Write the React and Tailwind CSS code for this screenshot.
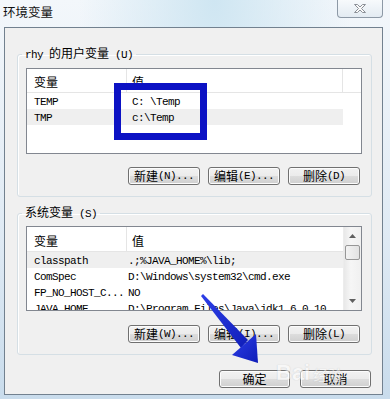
import React from "react";

// ascii text drawn in a monospace face, like SimSun's latin glyphs
function A({ children }) {
  return (
    <span className="font-['Liberation_Mono',monospace] text-[11px] tracking-[-0.6px]">
      {children}
    </span>
  );
}

function Btn({ cn, en, w = "w-[72px]" }) {
  return (
    <div
      className={`${w} h-[18px] rounded-[3px] border border-[#707070] bg-[linear-gradient(#f2f2f2_0%,#ebebeb_50%,#dddddd_50%,#cfcfcf_100%)] shadow-[inset_0_0_0_1px_#fcfcfc] flex items-center justify-center leading-[16px]`}
    >
      <span className="text-[12px]">{cn}</span>
      {en && <A>{" " + en}</A>}
    </div>
  );
}

function CloseBtn() {
  return (
    <div className="mr-[7px] w-[46px] h-[18px] border border-t-0 border-[#8d99a6] rounded-b-[4px] bg-[linear-gradient(#f7fafc,#e3ebf2)] flex items-center justify-center">
      <svg width="14" height="11" viewBox="0 0 14 11">
        <path
          d="M1.5 1.5h3l2.5 2.5 2.5-2.5h3l-4 4 4 4h-3l-2.5-2.5-2.5 2.5h-3l4-4z"
          fill="#fafafa"
          stroke="#8a8f96"
          strokeWidth="1"
          strokeLinejoin="round"
        />
      </svg>
    </div>
  );
}

function Header({ h }) {
  return (
    <div className={`${h} flex border-b border-[#e5e5e5] shrink-0`}>
      <div className="w-[100px] pl-[7px] pt-[3px] flex items-center border-r border-[#e5e5e5]">
        变量
      </div>
      <div className="w-[216px] pl-[5px] pt-[3px] flex items-center border-r border-[#e5e5e5]">
        值
      </div>
      <div className="flex-1" />
    </div>
  );
}

function Row({ name, value, sel, vpad = "pl-[5px]" }) {
  return (
    <div
      className={`w-[316px] h-[16px] flex items-center shrink-0 whitespace-nowrap overflow-hidden ${
        sel ? "bg-[#efefef]" : ""
      }`}
    >
      <div className="w-[100px] pl-[7px] overflow-hidden">
        <A>{name}</A>
      </div>
      <div className={`w-[216px] ${vpad} overflow-hidden`}>
        <A>{value}</A>
      </div>
    </div>
  );
}

function ScrollBar() {
  return (
    <div className="w-[18px] h-full bg-[linear-gradient(90deg,#e8e8e8,#f6f6f6_40%,#f0f0f0)] border-l border-[#ececec] flex flex-col items-center">
      <div className="h-[18px] w-full flex items-center justify-center">
        <svg width="7" height="4" viewBox="0 0 7 4">
          <path d="M0 4L3.5 0 7 4z" fill="#606060" />
        </svg>
      </div>
      <div className="h-[15px] w-[15px] rounded-[2px] border border-[#979797] bg-[linear-gradient(90deg,#f3f3f3,#e2e2e2)]" />
      <div className="flex-1" />
      <div className="h-[18px] w-full flex items-center justify-center">
        <svg width="7" height="4" viewBox="0 0 7 4">
          <path d="M0 0L3.5 4 7 0z" fill="#606060" />
        </svg>
      </div>
    </div>
  );
}

export default function App() {
  return (
    <div className="relative w-[390px] h-[399px] overflow-hidden bg-[radial-gradient(ellipse_at_55%_0%,#cfe6f2_0%,transparent_45%),linear-gradient(180deg,#f3f7fb_0%,#dfeaf4_60%,#c9dcec_100%)] font-['Noto_Sans_CJK_SC',sans-serif] text-[12px] text-black">
      {/* title bar */}
      <div className="h-[27px] flex items-start justify-between">
        <div className="pl-[3px] pt-[4px] text-[12.5px] leading-[16px] text-[#111]">
          环境变量
        </div>
        <CloseBtn />
      </div>

      {/* client area */}
      <div className="ml-[4px] w-[379px] h-[368px] border border-[#72818f] bg-[#f0f0f0] flex flex-col">
        <fieldset className="ml-[12px] mt-[17px] w-[355px] border border-[#d5dfe5] rounded-[3px] shadow-[inset_1px_1px_0_#fff] pb-[11px]">
          <legend className="ml-[4px] px-[3px] leading-[16px]">
            <A>rhy </A>的用户变量<A> (U)</A>
          </legend>
          <div className="mt-[5px] ml-[8px] w-[336px] h-[86px] border border-[#828790] bg-white flex flex-col overflow-hidden">
            <Header h="h-[24px]" />
            <Row name="TEMP" value="C: \Temp" />
            <Row name="TMP" value="c:\Temp" sel />
          </div>
          <div className="mt-[13px] pr-[11px] flex justify-end gap-[8px]">
            <Btn cn="新建" en="(N)..." />
            <Btn cn="编辑" en="(E)..." />
            <Btn cn="删除" en="(D)" />
          </div>
        </fieldset>

        <fieldset className="ml-[12px] mt-[7px] w-[355px] border border-[#d5dfe5] rounded-[3px] shadow-[inset_1px_1px_0_#fff] pb-[11px]">
          <legend className="ml-[4px] px-[3px] leading-[16px]">
            系统变量<A> (S)</A>
          </legend>
          <div className="mt-[4px] ml-[8px] w-[336px] h-[85px] border border-[#828790] bg-white flex overflow-hidden">
            <div className="w-[316px] flex flex-col">
              <div className="w-[316px] h-[25px] flex border-b border-[#e5e5e5] shrink-0">
                <div className="w-[100px] pl-[7px] pt-[3px] flex items-center border-r border-[#e5e5e5]">
                  变量
                </div>
                <div className="w-[216px] pl-[5px] pt-[3px] flex items-center">值</div>
              </div>
              <Row name="classpath" value=".;%JAVA_HOME%\lib;" sel vpad="pl-[1px]" />
              <Row name="ComSpec" value="D:\Windows\system32\cmd.exe" vpad="pl-[1px]" />
              <Row name="FP_NO_HOST_C..." value="NO" vpad="pl-[1px]" />
              <Row name="JAVA_HOME" value="D:\Program Files\Java\jdk1.6.0_10" vpad="pl-[1px]" />
            </div>
            <ScrollBar />
          </div>
          <div className="mt-[14px] pr-[11px] flex justify-end gap-[8px]">
            <Btn cn="新建" en="(W)..." />
            <Btn cn="编辑" en="(I)..." />
            <Btn cn="删除" en="(L)" />
          </div>
        </fieldset>

        <div className="mt-[15px] mr-[11px] flex justify-end gap-[10px]">
          <Btn cn="确定" w="w-[71px]" />
          <Btn cn="取消" w="w-[71px]" />
        </div>
      </div>

      {/* blue highlight box */}
      <div className="absolute left-[114px] top-[83px] w-[93px] h-[57px] border-[7px] border-[#0c12c4] pointer-events-none" />

      {/* watermark */}
      <div className="absolute left-[276px] top-[361px] flex items-end gap-[3px] pointer-events-none opacity-50">
        <span className="font-['Liberation_Sans',sans-serif] font-bold text-[22px] leading-[24px] text-white [text-shadow:0_0_1px_#9a9a9a]">
          Bai
        </span>
        <span className="text-[15px] leading-[20px] text-white [text-shadow:0_0_1px_#9a9a9a]">经验</span>
      </div>

      {/* arrow */}
      <svg className="absolute left-0 top-0 pointer-events-none" width="390" height="399" viewBox="0 0 390 399">
        <defs>
          <linearGradient id="ag" x1="0" y1="0" x2="1" y2="1">
            <stop offset="0" stopColor="#2d3fe8" />
            <stop offset="1" stopColor="#0f1db8" />
          </linearGradient>
        </defs>
        <polygon points="201,296 203,294 248,340 241,348" fill="url(#ag)" />
        <polygon points="232,355 256,334 258,363" fill="url(#ag)" />
      </svg>
    </div>
  );
}
